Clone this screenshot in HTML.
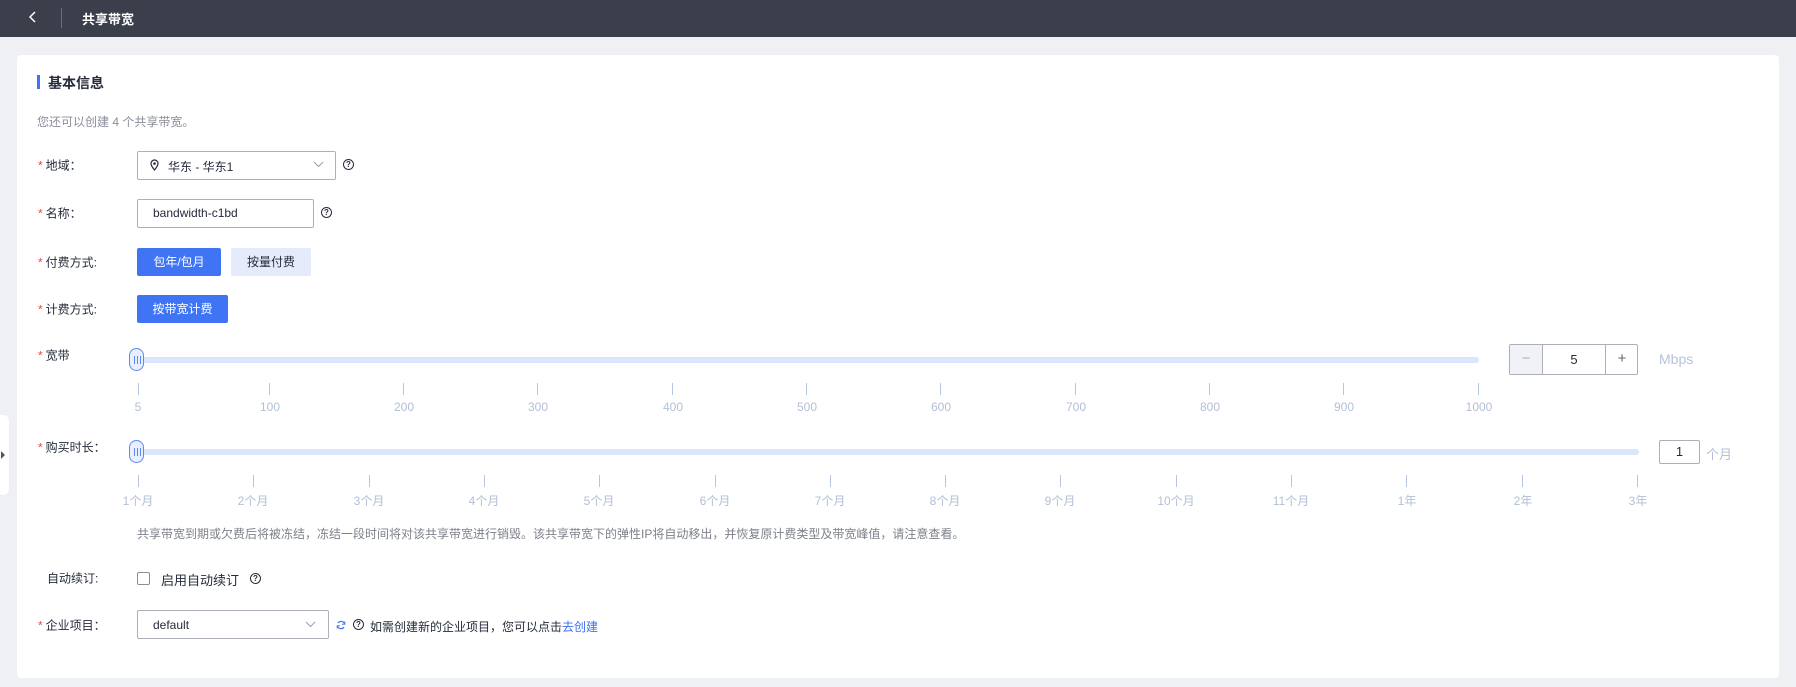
<!DOCTYPE html>
<html><head><meta charset="utf-8"><style>
*{margin:0;padding:0;box-sizing:border-box}
body{width:1796px;height:687px;background:#eef0f4;font-family:"Liberation Sans","Noto Sans CJK SC",sans-serif;font-size:12px;color:#252b3a;position:relative;overflow:hidden}
.a{position:absolute}
.hdr{left:0;top:0;width:1796px;height:37px;background:#3b3f4b}
.card{left:17px;top:55px;width:1762px;height:623px;background:#fff;border-radius:4px}
.lab{left:38px;transform:translateY(-50%);white-space:nowrap}
.lab i{color:#e5484d;font-style:normal;margin-right:3px}
.box{border:1px solid #adb0b8;border-radius:2px;background:#fff}
.btn{color:#fff;background:#3f75f5;border-radius:2px;text-align:center}
.q{width:11px;height:11px;border:1.3px solid #252b3a;border-radius:50%;font-size:8px;line-height:9px;text-align:center;font-weight:bold}
.track{height:6px;background:#dce6fa;border-radius:3px}
.thumb{width:15px;height:23px;border:1.5px solid #5a8af5;border-radius:8px;background:#e9effd}
.thumb:after{content:"";position:absolute;left:4px;top:7px;width:5px;height:8px;border-left:1px solid #5a8af5;border-right:1px solid #5a8af5;background:linear-gradient(90deg,transparent 2px,#5a8af5 2px,#5a8af5 3px,transparent 3px)}
.tick{width:1px;height:12px;background:#b7c6e2}
.tl{color:#b3bfd6;font-size:12px;transform:translateX(-50%);white-space:nowrap}
.gray{color:#8a8e99}
</style></head><body>
<div class="a hdr">
 <svg class="a" style="left:28px;top:10px" width="10" height="14" viewBox="0 0 10 14"><path d="M7 2L2 7l5 5" fill="none" stroke="#fff" stroke-width="1.5"/></svg>
 <div class="a" style="left:61px;top:8px;width:1px;height:20px;background:#6b6f7a"></div>
 <div class="a" style="left:82px;top:9px;color:#fff;font-size:13px;font-weight:bold">共享带宽</div>
</div>
<div class="a" style="left:0;top:415px;width:9px;height:80px;background:#fff;border-radius:0 6px 6px 0"></div>
<div class="a" style="left:1px;top:451px;width:0;height:0;border-left:4px solid #555;border-top:4px solid transparent;border-bottom:4px solid transparent"></div>
<div class="a card"></div>
<div class="a" style="left:37px;top:75px;width:3px;height:14px;background:#3f75f5"></div>
<div class="a" style="left:48px;top:73px;font-size:14px;font-weight:bold">基本信息</div>
<div class="a gray" style="left:37px;top:113px">您还可以创建 4 个共享带宽。</div>

<div class="a lab" style="top:165px"><i>*</i>地域：</div>
<div class="a box" style="left:137px;top:151px;width:199px;height:29px"></div>
<svg class="a" style="left:150px;top:159px" width="9" height="12" viewBox="0 0 9 12"><path d="M4.5 11C2 8 1 6.3 1 4.5a3.5 3.5 0 017 0C8 6.3 7 8 4.5 11z" fill="none" stroke="#252b3a" stroke-width="1.2"/><circle cx="4.5" cy="4.5" r="1.3" fill="#252b3a"/></svg>
<div class="a" style="left:168px;top:158px">华东 - 华东1</div>
<svg class="a" style="left:313px;top:161px" width="11" height="7" viewBox="0 0 11 7"><path d="M1 1l4.5 4.5L10 1" fill="none" stroke="#9aa0ab" stroke-width="1"/></svg>
<div class="a q" style="left:343px;top:159px">?</div>

<div class="a lab" style="top:213px"><i>*</i>名称：</div>
<div class="a box" style="left:137px;top:199px;width:177px;height:29px"></div>
<div class="a" style="left:153px;top:206px">bandwidth-c1bd</div>
<div class="a q" style="left:321px;top:207px">?</div>

<div class="a lab" style="top:262px"><i>*</i>付费方式:</div>
<div class="a btn" style="left:137px;top:248px;width:84px;height:28px;line-height:28px">包年/包月</div>
<div class="a" style="left:231px;top:248px;width:80px;height:28px;line-height:28px;background:#e5ebfa;border-radius:2px;text-align:center">按量付费</div>

<div class="a lab" style="top:309px"><i>*</i>计费方式:</div>
<div class="a btn" style="left:137px;top:295px;width:91px;height:28px;line-height:28px">按带宽计费</div>

<div class="a lab" style="top:355px"><i>*</i>宽带</div>
<div class="a track" style="left:132px;top:357px;width:1347px"></div>
<div class="a thumb" style="left:129px;top:348px"></div>
<div class="a tick" style="left:138px;top:383px"></div><div class="a tl" style="left:138px;top:400px">5</div>
<div class="a tick" style="left:269px;top:383px"></div><div class="a tl" style="left:270px;top:400px">100</div>
<div class="a tick" style="left:403px;top:383px"></div><div class="a tl" style="left:404px;top:400px">200</div>
<div class="a tick" style="left:537px;top:383px"></div><div class="a tl" style="left:538px;top:400px">300</div>
<div class="a tick" style="left:672px;top:383px"></div><div class="a tl" style="left:673px;top:400px">400</div>
<div class="a tick" style="left:806px;top:383px"></div><div class="a tl" style="left:807px;top:400px">500</div>
<div class="a tick" style="left:940px;top:383px"></div><div class="a tl" style="left:941px;top:400px">600</div>
<div class="a tick" style="left:1075px;top:383px"></div><div class="a tl" style="left:1076px;top:400px">700</div>
<div class="a tick" style="left:1209px;top:383px"></div><div class="a tl" style="left:1210px;top:400px">800</div>
<div class="a tick" style="left:1343px;top:383px"></div><div class="a tl" style="left:1344px;top:400px">900</div>
<div class="a tick" style="left:1478px;top:383px"></div><div class="a tl" style="left:1479px;top:400px">1000</div>
<div class="a box" style="left:1509px;top:344px;width:129px;height:31px;overflow:hidden">
 <div class="a" style="left:0;top:0;width:33px;height:29px;background:#f0f2f7;border-right:1px solid #adb0b8;text-align:center;line-height:28px;color:#aab0bb;font-size:15px">−</div>
 <div class="a" style="left:33px;top:0;width:62px;height:29px;text-align:center;line-height:29px;font-size:13px">5</div>
 <div class="a" style="left:95px;top:0;width:33px;height:29px;border-left:1px solid #adb0b8;text-align:center;line-height:28px;color:#666;font-size:15px">+</div>
</div>
<div class="a" style="left:1659px;top:351px;color:#b6c3dd;font-size:14px">Mbps</div>

<div class="a lab" style="top:447px"><i>*</i>购买时长：</div>
<div class="a track" style="left:132px;top:449px;width:1507px"></div>
<div class="a thumb" style="left:129px;top:440px"></div>
<div class="a tick" style="left:138px;top:475px"></div><div class="a tl" style="left:138px;top:492px">1个月</div>
<div class="a tick" style="left:253px;top:475px"></div><div class="a tl" style="left:253px;top:492px">2个月</div>
<div class="a tick" style="left:369px;top:475px"></div><div class="a tl" style="left:369px;top:492px">3个月</div>
<div class="a tick" style="left:484px;top:475px"></div><div class="a tl" style="left:484px;top:492px">4个月</div>
<div class="a tick" style="left:599px;top:475px"></div><div class="a tl" style="left:599px;top:492px">5个月</div>
<div class="a tick" style="left:715px;top:475px"></div><div class="a tl" style="left:715px;top:492px">6个月</div>
<div class="a tick" style="left:830px;top:475px"></div><div class="a tl" style="left:830px;top:492px">7个月</div>
<div class="a tick" style="left:945px;top:475px"></div><div class="a tl" style="left:945px;top:492px">8个月</div>
<div class="a tick" style="left:1060px;top:475px"></div><div class="a tl" style="left:1060px;top:492px">9个月</div>
<div class="a tick" style="left:1176px;top:475px"></div><div class="a tl" style="left:1176px;top:492px">10个月</div>
<div class="a tick" style="left:1291px;top:475px"></div><div class="a tl" style="left:1291px;top:492px">11个月</div>
<div class="a tick" style="left:1406px;top:475px"></div><div class="a tl" style="left:1407px;top:492px">1年</div>
<div class="a tick" style="left:1522px;top:475px"></div><div class="a tl" style="left:1523px;top:492px">2年</div>
<div class="a tick" style="left:1637px;top:475px"></div><div class="a tl" style="left:1638px;top:492px">3年</div>
<div class="a box" style="left:1659px;top:440px;width:41px;height:24px;text-align:center;line-height:22px;font-size:13px">1</div>
<div class="a" style="left:1706px;top:444px;color:#b3bfd6;font-size:13px">个月</div>

<div class="a gray" style="left:137px;top:525px;color:#7d818b">共享带宽到期或欠费后将被冻结，冻结一段时间将对该共享带宽进行销毁。该共享带宽下的弹性IP将自动移出，并恢复原计费类型及带宽峰值，请注意查看。</div>

<div class="a lab" style="top:578px;left:47px">自动续订:</div>
<div class="a" style="left:137px;top:572px;width:13px;height:13px;border:1px solid #8a8e99;border-radius:2px"></div>
<div class="a" style="left:161px;top:570px;font-size:13px">启用自动续订</div>
<div class="a q" style="left:250px;top:573px">?</div>

<div class="a lab" style="top:625px"><i>*</i>企业项目：</div>
<div class="a box" style="left:137px;top:610px;width:192px;height:29px"></div>
<div class="a" style="left:153px;top:618px">default</div>
<svg class="a" style="left:305px;top:621px" width="11" height="7" viewBox="0 0 11 7"><path d="M1 1l4.5 4.5L10 1" fill="none" stroke="#9aa0ab" stroke-width="1"/></svg>
<svg class="a" style="left:336px;top:620px" width="10" height="10" viewBox="0 0 10 10"><path d="M8.5 4A3.6 3.6 0 002 3M1.5 6A3.6 3.6 0 008 7" fill="none" stroke="#4a7bf5" stroke-width="1.2"/><path d="M8.8 1.5v2.8H6M1.2 8.5V5.7H4" fill="none" stroke="#4a7bf5" stroke-width="1"/></svg>
<div class="a q" style="left:353px;top:619px">?</div>
<div class="a" style="left:370px;top:618px">如需创建新的企业项目，您可以点击<span style="color:#3d6ef5">去创建</span></div>
</body></html>
